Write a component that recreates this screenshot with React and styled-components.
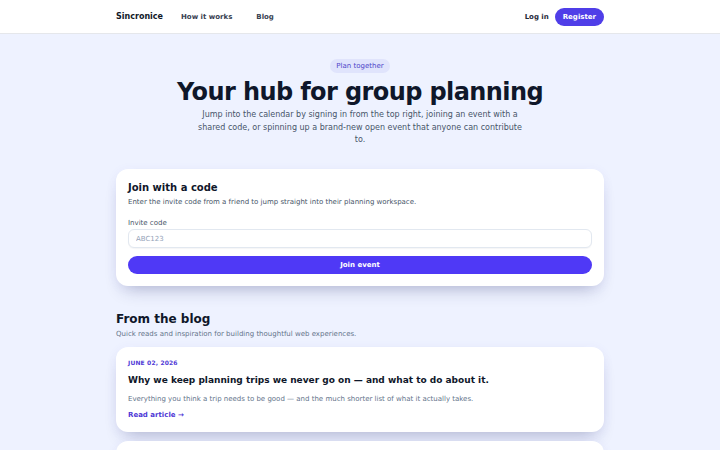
import styled, { createGlobalStyle } from "styled-components";

const GlobalStyle = createGlobalStyle`
  html, body {
    margin: 0;
    padding: 0;
    background: #eef2ff;
    font-family: "DejaVu Sans", "Noto Sans", sans-serif;
    color: #0f172a;
  }
  * { box-sizing: border-box; }
`;

const posts = [
  {
    date: "June 02, 2026",
    title: "Why we keep planning trips we never go on — and what to do about it.",
    excerpt:
      "Everything you think a trip needs to be good — and the much shorter list of what it actually takes.",
  },
  {
    date: "May 18, 2026",
    title: "The five-minute poll that saves a whole group chat.",
    excerpt: "How to pick a date without forty messages and three spreadsheets.",
  },
];

function App() {
  return (
    <>
      <GlobalStyle />
      <Header>
        <Bar>
          <NavGroup>
            <Logo>Sincronice</Logo>
            <NavLink>How it works</NavLink>
            <NavLink>Blog</NavLink>
          </NavGroup>
          <NavGroup $gap={6}>
            <LoginLink>Log in</LoginLink>
            <RegisterButton>Register</RegisterButton>
          </NavGroup>
        </Bar>
      </Header>

      <Main>
        <Hero>
          <Badge>Plan together</Badge>
          <Title>Your hub for group planning</Title>
          <Lead>
            Jump into the calendar by signing in from the top right, joining an
            event with a shared code, or spinning up a brand-new open event that
            anyone can contribute to.
          </Lead>
        </Hero>

        <Card>
          <CardTitle>Join with a code</CardTitle>
          <CardText>
            Enter the invite code from a friend to jump straight into their
            planning workspace.
          </CardText>
          <Label htmlFor="code">Invite code</Label>
          <Input id="code" placeholder="ABC123" />
          <PrimaryButton>Join event</PrimaryButton>
        </Card>

        <Section>
          <SectionTitle>From the blog</SectionTitle>
          <SectionText>
            Quick reads and inspiration for building thoughtful web experiences.
          </SectionText>
          <PostList>
            {posts.map((p) => (
              <Post key={p.title}>
                <PostDate>{p.date}</PostDate>
                <PostTitle>{p.title}</PostTitle>
                <PostExcerpt>{p.excerpt}</PostExcerpt>
                <ReadMore>Read article →</ReadMore>
              </Post>
            ))}
          </PostList>
        </Section>
      </Main>
    </>
  );
}

export default App;

const Header = styled.header`
  height: 34px;
  background: #ffffff;
  border-bottom: 1px solid #e5e7eb;
`;

const Bar = styled.div`
  width: 488px;
  height: 33px;
  margin: 0 auto;
  display: flex;
  align-items: center;
  justify-content: space-between;
`;

const NavGroup = styled.div`
  display: flex;
  align-items: center;
  gap: ${(p) => p.$gap ?? 12}px;
`;

const Logo = styled.span`
  font-size: 8px;
  font-weight: 700;
  color: #111827;
`;

const NavLink = styled.a`
  padding: 0 6px;
  font-size: 7px;
  font-weight: 700;
  color: #374151;
`;

const LoginLink = styled.a`
  font-size: 7px;
  font-weight: 700;
  color: #1f2937;
`;

const RegisterButton = styled.button`
  height: 18px;
  padding: 0 8px;
  border: none;
  border-radius: 999px;
  background: #4f3ee8;
  color: #ffffff;
  font-family: inherit;
  font-size: 7px;
  font-weight: 700;
`;

const Main = styled.main`
  width: 488px;
  margin: 0 auto;
  padding: 25px 0 40px;
`;

const Hero = styled.div`
  display: flex;
  flex-direction: column;
  align-items: center;
  text-align: center;
`;

const Badge = styled.span`
  height: 14px;
  line-height: 14px;
  padding: 0 6px;
  border-radius: 999px;
  background: #e0e4fc;
  color: #4f46c9;
  font-size: 7px;
  font-weight: 500;
`;

const Title = styled.h1`
  margin: 5px 0 0;
  font-size: 24px;
  line-height: 28px;
  font-weight: 700;
  letter-spacing: -0.6px;
  color: #0f172a;
`;

const Lead = styled.p`
  max-width: 336px;
  margin: 3px 0 0;
  font-size: 8px;
  line-height: 12.5px;
  color: #475569;
`;

const Card = styled.div`
  margin-top: 22.5px;
  padding: 12px;
  display: flex;
  flex-direction: column;
  background: #ffffff;
  border-radius: 12px;
  box-shadow: 0 10px 18px -8px rgba(30, 41, 90, 0.3),
    0 2px 12px rgba(79, 70, 229, 0.06);
`;

const CardTitle = styled.h2`
  margin: 0;
  font-size: 10px;
  line-height: 14px;
  font-weight: 700;
  color: #0f172a;
`;

const CardText = styled.p`
  margin: 2px 0 0;
  font-size: 7px;
  line-height: 10px;
  color: #475569;
`;

const Label = styled.label`
  margin-top: 11px;
  font-size: 7px;
  line-height: 10px;
  color: #475569;
`;

const Input = styled.input`
  margin-top: 1px;
  height: 19px;
  padding: 0 7px;
  border: 1px solid #e2e8f0;
  border-radius: 6px;
  background: #ffffff;
  font-family: inherit;
  font-size: 7px;
  color: #0f172a;
  outline: none;
  box-shadow: 0 1px 1px rgba(15, 23, 42, 0.04);

  &::placeholder {
    color: #94a3b8;
  }
`;

const PrimaryButton = styled.button`
  margin-top: 8px;
  height: 18px;
  border: none;
  border-radius: 999px;
  background: #4f39f6;
  color: #ffffff;
  font-family: inherit;
  font-size: 7px;
  font-weight: 700;
`;

const Section = styled.section`
  margin-top: 25px;
`;

const SectionTitle = styled.h2`
  margin: 0;
  font-size: 12px;
  line-height: 16px;
  font-weight: 700;
  color: #0f172a;
`;

const SectionText = styled.p`
  margin: 2px 0 0;
  font-size: 7px;
  line-height: 10px;
  color: #64748b;
`;

const PostList = styled.div`
  margin-top: 8px;
  display: flex;
  flex-direction: column;
  gap: 9px;
`;

const Post = styled.article`
  padding: 12px;
  background: #ffffff;
  border-radius: 12px;
  box-shadow: 0 10px 18px -8px rgba(30, 41, 90, 0.3),
    0 2px 12px rgba(79, 70, 229, 0.06);
`;

const PostDate = styled.div`
  font-size: 6px;
  line-height: 8px;
  font-weight: 700;
  letter-spacing: 0.15px;
  text-transform: uppercase;
  color: #4f39d6;
`;

const PostTitle = styled.h3`
  margin: 7px 0 0;
  font-size: 9px;
  line-height: 13px;
  font-weight: 700;
  color: #0f172a;
`;

const PostExcerpt = styled.p`
  margin: 7px 0 0;
  font-size: 7px;
  line-height: 10px;
  color: #64748b;
`;

const ReadMore = styled.a`
  display: block;
  margin-top: 6px;
  font-size: 7px;
  line-height: 10px;
  font-weight: 700;
  color: #4f39d6;
`;
